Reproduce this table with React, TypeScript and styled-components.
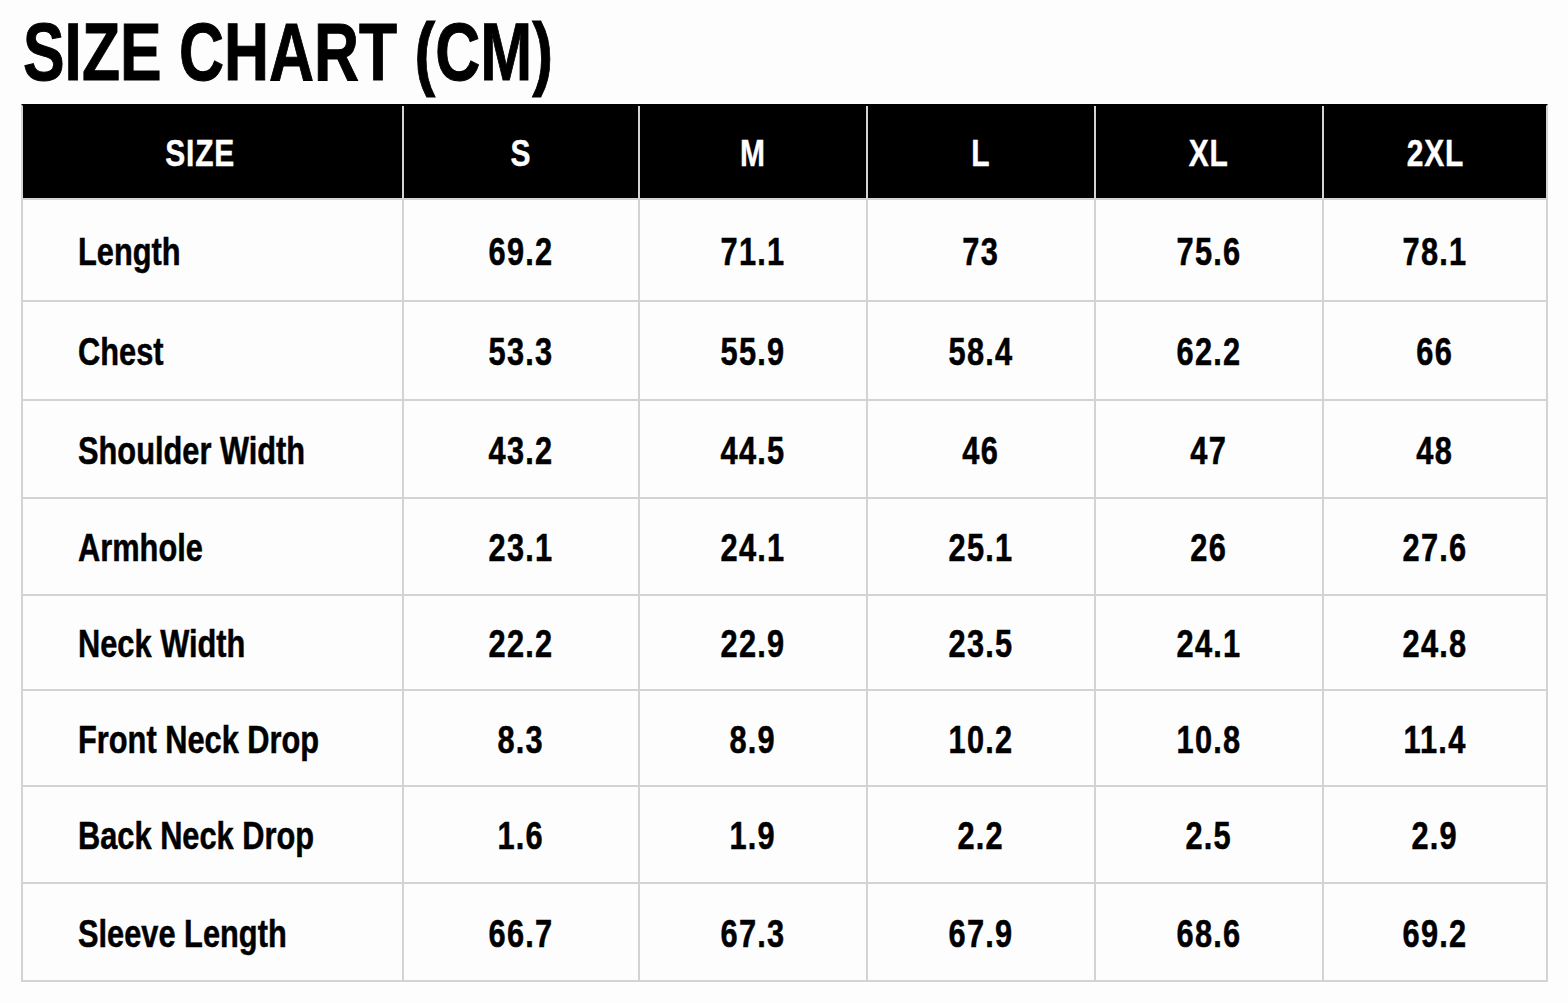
import React from "react";
import styled, { createGlobalStyle } from "styled-components";

const GlobalStyle = createGlobalStyle`
  html, body {
    margin: 0;
    padding: 0;
    background: #fdfdfd;
  }
  body {
    font-family: "Liberation Sans", Arial, sans-serif;
    color: #000;
  }
`;

const Page = styled.div`
  width: 1568px;
  height: 1003px;
  padding: 0 0 0 21px;
  box-sizing: border-box;
  overflow: hidden;
`;

const Title = styled.h1`
  margin: 0;
  padding: 0 0 0 2px;
  height: 104px;
  font-size: 81px;
  line-height: 104px;
  font-weight: 700;
  -webkit-text-stroke: 1px #000;
`;

// the chart uses a condensed heavy face; squeeze Arial-metric bold to match
const Narrow = styled.span<{ $k: number; $origin?: string; $track?: number }>`
  display: inline-block;
  transform: scaleX(${(p) => p.$k});
  transform-origin: ${(p) => p.$origin ?? "center"} center;
  letter-spacing: ${(p) => p.$track ?? 0}px;
  white-space: nowrap;
`;

const Grid = styled.div`
  display: grid;
  width: 1527px;
  box-sizing: border-box;
  grid-template-columns: 379px 234px 226px 226px 226px 222px;
  grid-template-rows: 92px 100px 97px 96px 95px 93px 94px 95px 96px;
  gap: 2px;
  background: #d3d3d3;
  border: 2px solid #d3d3d3;
  border-top-color: #000;
`;

const Cell = styled.div<{ $label?: boolean }>`
  display: flex;
  align-items: center;
  justify-content: ${(p) => (p.$label ? "flex-start" : "center")};
  padding-left: ${(p) => (p.$label ? "55px" : "0")};
  padding-top: 4px;
  background: #fdfdfd;
  color: #000;
  font-size: 38px;
  font-weight: 700;
  -webkit-text-stroke: 0.5px #000;
`;

const HeadCell = styled.div<{ $first?: boolean }>`
  display: flex;
  align-items: center;
  justify-content: center;
  padding-top: 4px;
  padding-right: ${(p) => (p.$first ? "24px" : "0")};
  background: #000;
  color: #fff;
  font-size: 37px;
  font-weight: 700;
  -webkit-text-stroke: 0.4px #fff;
`;

const sizes = ["SIZE", "S", "M", "L", "XL", "2XL"];

const rows: [string, string[]][] = [
  ["Length", ["69.2", "71.1", "73", "75.6", "78.1"]],
  ["Chest", ["53.3", "55.9", "58.4", "62.2", "66"]],
  ["Shoulder Width", ["43.2", "44.5", "46", "47", "48"]],
  ["Armhole", ["23.1", "24.1", "25.1", "26", "27.6"]],
  ["Neck Width", ["22.2", "22.9", "23.5", "24.1", "24.8"]],
  ["Front Neck Drop", ["8.3", "8.9", "10.2", "10.8", "11.4"]],
  ["Back Neck Drop", ["1.6", "1.9", "2.2", "2.5", "2.9"]],
  ["Sleeve Length", ["66.7", "67.3", "67.9", "68.6", "69.2"]],
];

export default function App() {
  return (
    <>
      <GlobalStyle />
      <Page>
        <Title>
          <Narrow $k={0.77} $origin="left">
            SIZE CHART (CM)
          </Narrow>
        </Title>
        <Grid>
          {sizes.map((s, i) => (
            <HeadCell key={s} $first={i === 0}>
              <Narrow $k={0.81} $track={1}>
                {s}
              </Narrow>
            </HeadCell>
          ))}
          {rows.map(([label, values]) => (
            <React.Fragment key={label}>
              <Cell $label>
                <Narrow $k={0.81} $origin="left">
                  {label}
                </Narrow>
              </Cell>
              {values.map((v, i) => (
                <Cell key={i}>
                  <Narrow $k={0.81} $track={1.5}>
                    {v}
                  </Narrow>
                </Cell>
              ))}
            </React.Fragment>
          ))}
        </Grid>
      </Page>
    </>
  );
}
